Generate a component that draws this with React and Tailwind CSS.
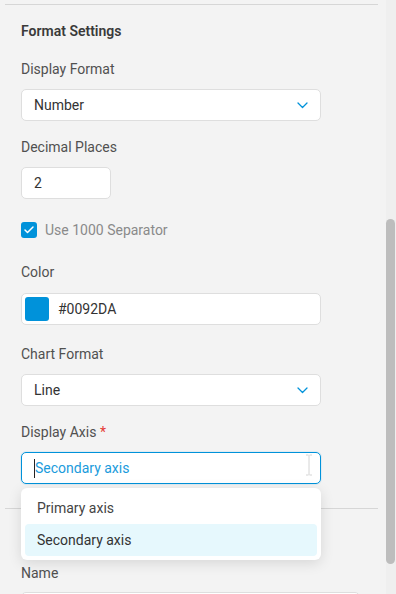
import { Check } from 'lucide-react';

function Chevron() {
  return (
    <svg width="11" height="7" viewBox="0 0 11 7" fill="none" className="text-[#0092DA]">
      <path d="M1 1l4.5 4.5L10 1" stroke="currentColor" strokeWidth="1.3" strokeLinecap="round" strokeLinejoin="round" />
    </svg>
  );
}

function Label({ children, className = '' }) {
  return <div className={`text-[14px] leading-[22px] text-[#505050] ${className}`}>{children}</div>;
}

function Select({ value, className = '' }) {
  return (
    <div className={`h-8 w-[300px] rounded-[5px] border border-[#dedede] bg-white flex items-center justify-between pl-3 pr-3 ${className}`}>
      <span className="text-[14px] text-[#333]">{value}</span>
      <Chevron />
    </div>
  );
}

export default function App() {
  return (
    <div className="w-[396px] h-[594px] overflow-hidden bg-[#f3f3f3] flex" style={{ fontFamily: 'Roboto, "Noto Sans", sans-serif' }}>
      <div className="w-[386px] flex flex-col">
        <div className="mt-1 ml-[5px] h-px w-[373px] shrink-0 bg-[#d6d6d6]" />

        <div className="pl-[21px] flex flex-col">
          {/* Format settings heading */}
          <div className="mt-[16px] text-[14px] leading-[20px] font-semibold text-[#3a3a3a]">Format Settings</div>

          <Label className="mt-[17px]">Display Format</Label>
          <Select value="Number" className="mt-[9px]" />

          <Label className="mt-[15px]">Decimal Places</Label>
          <div className="mt-[9px] h-8 w-[90px] rounded-[5px] border border-[#dedede] bg-white flex items-center pl-3 text-[14px] text-[#333]">2</div>

          <div className="mt-[23px] flex items-center gap-2 h-4">
            <div className="w-4 h-4 rounded-[3px] bg-[#0092DA] flex items-center justify-center">
              <Check size={12} strokeWidth={3} color="white" />
            </div>
            <span className="text-[14px] text-[#8a8a8a]">Use 1000 Separator</span>
          </div>

          <Label className="mt-[23px]">Color</Label>
          <div className="mt-[10px] h-8 w-[300px] rounded-[5px] border border-[#dedede] bg-white flex items-center pl-[3px] gap-[9px]">
            <div className="w-6 h-6 rounded-[3px] bg-[#0092DA]" />
            <span className="text-[14px] text-[#333]">#0092DA</span>
          </div>

          <Label className="mt-[18px]">Chart Format</Label>
          <Select value="Line" className="mt-[9px]" />

          <Label className="mt-[15px]">
            Display Axis <span className="text-[#e53935]">*</span>
          </Label>
          <div className="relative mt-[9px] w-[300px]">
            <div className="h-8 rounded-[5px] border border-[#0092DA] bg-white shadow-[0_0_0_1px_rgba(0,146,218,0.08)] flex items-center pl-3">
              <span className="w-px h-[19px] bg-[#222]" />
              <span className="text-[14px] text-[#1a9bdc]">Secondary axis</span>
              <svg className="absolute right-[8px] top-[1px]" width="8" height="24" viewBox="0 0 8 24" fill="none">
                <path d="M1 2h2.5M4.5 2H7M4 2v20M1 22h2.5M4.5 22H7" stroke="#d4d4d4" strokeWidth="1" />
              </svg>
            </div>
            {/* dropdown menu */}
            <div className="absolute left-0 top-9 z-10 w-[300px] rounded-[6px] bg-white p-1 shadow-[0_3px_14px_rgba(0,0,0,0.12)]">
              <div className="h-8 flex items-center pl-3 text-[14px] text-[#444]">Primary axis</div>
              <div className="h-8 flex items-center pl-3 rounded-[4px] bg-[#e6f8fd] text-[14px] text-[#333]">Secondary axis</div>
            </div>
          </div>
        </div>

        <div className="mt-6 ml-[5px] h-px w-[373px] shrink-0 bg-[#d6d6d6]" />

        <div className="pl-[21px] flex flex-col">
          <Label className="mt-[53px]">Name</Label>
          <div className="mt-[8px] h-8 w-[339px] rounded-[5px] border border-[#dedede] bg-white" />
        </div>
      </div>

      {/* scrollbar */}
      <div className="w-[10px] bg-[#efefef] flex flex-col">
        <div className="mt-[219px] h-[345px] w-[9px] rounded-full bg-[#bdbdbd]" />
      </div>
    </div>
  );
}
